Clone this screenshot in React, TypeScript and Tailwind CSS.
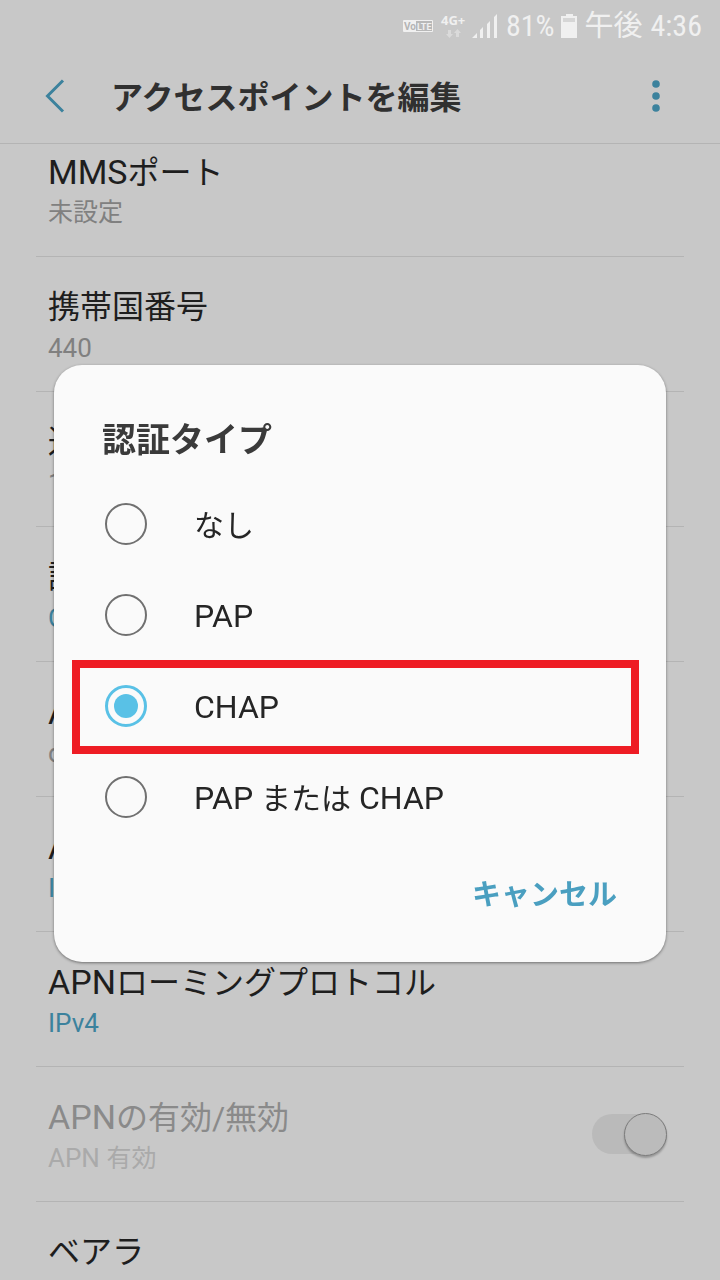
import React, { useState } from "react";
import clsx from "clsx";

interface Setting {
  latin?: string;
  title: string;
  valueLatin?: string;
  value?: string;
  accent?: boolean;
}

const settings: Setting[] = [
  { latin: "MMS", title: "ポート", value: "未設定" },
  { title: "携帯国番号", valueLatin: "440" },
  { title: "通信事業者コード", valueLatin: "10" },
  { title: "認証タイプ", valueLatin: "CHAP", accent: true },
  { latin: "APN", title: "タイプ", valueLatin: "default,supl" },
  { latin: "APN", title: "プロトコル", valueLatin: "IPv4", accent: true },
  { latin: "APN", title: "ローミングプロトコル", valueLatin: "IPv4", accent: true },
];

const authTypes = [
  { id: "none", label: <span className="text-[30px]">なし</span> },
  { id: "pap", label: "PAP" },
  { id: "chap", label: "CHAP", highlighted: true },
  {
    id: "pap-chap",
    label: (
      <>
        PAP <span className="text-[30px]">または</span> CHAP
      </>
    ),
  },
];

function StatusBar() {
  return (
    <div className="flex h-12 shrink-0 items-center justify-end pr-[18px] pt-1 font-['Roboto_Condensed','Roboto','Noto_Sans_CJK_JP',sans-serif] text-[30px] leading-none text-[#f0f0f0]">
      <svg width="30" height="12" viewBox="0 0 30 12" className="mr-2" aria-label="VoLTE">
        <rect width="30" height="12" rx="1" fill="#f0f0f0" />
        <rect x="13" y="1" width="16" height="10" fill="#b8b8b8" />
        <text x="1" y="9.5" fontSize="10" fontWeight="700" fontFamily="Roboto" fill="#b4b4b4">Vo</text>
        <text x="14" y="9.5" fontSize="9" fontWeight="700" fontFamily="Roboto" fill="#f0f0f0">LTE</text>
      </svg>
      <svg width="26" height="26" viewBox="0 0 26 26" className="mr-[5px] overflow-visible" aria-label="4G+">
        <text x="0" y="12" fontSize="13" fontWeight="700" fontFamily="Open Sans" fill="#f0f0f0">4G+</text>
        <path d="M7 17h3v4h2l-3.500 4-3.500-4h2z" fill="#dadada" />
        <path d="M15 24h3v-4h2l-3.500-4-3.500 4h2z" fill="#dadada" />
      </svg>
      <svg width="25" height="24" viewBox="0 0 25 24" className="mr-[9px]" fill="#f0f0f0">
        <path d="M0 24l5-5v5zM8 24v-8l3-3v11zM15 24V10l3-3v17zM22 24V3l3-3v24z" />
      </svg>
      <span className="mr-[6px]">81%</span>
      <svg width="16" height="24" viewBox="0 0 16 24" className="mr-2">
        <path d="M5 0h7v2h4v22H0V2h5z" fill="#f0f0f0" />
        <path d="M2 4h12v4H2z" fill="#d6d6d6" />
      </svg>
      <span className="mr-2 text-[29px]">午後</span>
      <span>4:36</span>
    </div>
  );
}

function Header() {
  return (
    <header className="flex h-24 shrink-0 items-center border-b border-[#b4b4b4] pl-[45px] pr-[48px]">
      <button aria-label="戻る" className="mr-[46px]">
        <svg width="20" height="34" viewBox="0 0 20 34" fill="none" stroke="#3c829d" strokeWidth="3">
          <path d="M18 1.500L2.500 17 18 32.500" />
        </svg>
      </button>
      <h1 className="grow pt-1 text-[32px] font-bold leading-none text-[#303030]">アクセスポイントを編集</h1>
      <button aria-label="その他" className="flex w-8 justify-center">
        <svg width="8" height="32" viewBox="0 0 8 32" fill="#3c829d">
          <circle cx="4" cy="4" r="3.800" />
          <circle cx="4" cy="16" r="3.800" />
          <circle cx="4" cy="28" r="3.800" />
        </svg>
      </button>
    </header>
  );
}

function SettingText({ latin, title, valueLatin, value, accent }: Setting) {
  return (
    <div>
      <div className="h-11 whitespace-nowrap text-[32px] leading-[44px]">
        {latin && <span className="text-[34px]">{latin}</span>}
        {title}
      </div>
      <div className={clsx("h-[38px] text-[25px] leading-[38px]", accent ? "text-[#3c829d]" : "text-[#808080]")}>
        {valueLatin && <span className="text-[26px]">{valueLatin}</span>}
        {value}
      </div>
    </div>
  );
}

function SettingsList() {
  return (
    <ul className="min-h-0 grow overflow-hidden px-9 text-[#1e1e1e]">
      {settings.map((item, i) => (
        <li
          key={i}
          className={clsx("border-b border-[#b4b4b4] px-3 pb-6", i === 0 ? "pt-[6px]" : "pt-7")}
        >
          <SettingText {...item} />
        </li>
      ))}
      <li className="border-b border-[#b4b4b4]">
        <label className="flex items-center justify-between px-3 pb-6 pt-7">
          <span className="block">
            <span className="block h-11 text-[32px] leading-[44px] text-[#8a8a8a]">
              <span className="text-[34px]">APN</span>の有効/無効
            </span>
            <span className="block h-[38px] text-[25px] leading-[38px] text-[#aaaaaa]">
              <span className="text-[26px]">APN </span>有効
            </span>
          </span>
          <input type="checkbox" role="switch" defaultChecked disabled className="sr-only" />
          <span className="mb-1 mr-[5px] flex h-10 w-[75px] items-center justify-end rounded-full bg-[#bababa]">
            <span className="size-[43px] shrink-0 rounded-full border border-[#7c7c7c] bg-[#bbbbbb] shadow-[0_2px_2px_rgba(0,0,0,0.25)]" />
          </span>
        </label>
      </li>
      <li className="px-3 pb-6 pt-7">
        <SettingText title="ベアラ" />
      </li>
    </ul>
  );
}

function AuthTypeDialog() {
  const [selected, setSelected] = useState("chap");

  return (
    <div className="fixed inset-0 flex items-center px-[54px] pt-[47px]">
      <div
        role="dialog"
        aria-labelledby="auth-title"
        className="w-full rounded-[28px] bg-[#fafafa] pb-[37px] pt-[50px] shadow-[0_1px_3px_rgba(0,0,0,0.45)]"
      >
        <h2 id="auth-title" className="mb-[13px] pl-12 text-[34px] font-bold leading-[50px] text-[#3a3a3a]">
          認証タイプ
        </h2>
        {authTypes.map((type) => (
          <label
            key={type.id}
            className="relative flex h-[91px] items-center pl-[51px] text-[32px] leading-none text-[#252525]"
          >
            <input
              type="radio"
              name="auth"
              checked={selected === type.id}
              onChange={() => setSelected(type.id)}
              className="peer sr-only"
            />
            <span className="mr-[47px] flex size-[42px] items-center justify-center rounded-full border-2 border-[#707070] peer-checked:border-[3px] peer-checked:border-[#59c1e6] peer-checked:[&>span]:bg-[#59c1e6]">
              <span className="size-6 rounded-full" />
            </span>
            <span className="pt-[2px]">{type.label}</span>
            {type.highlighted && (
              <span className="pointer-events-none absolute -bottom-[3px] left-[18px] right-[27px] top-0 border-8 border-[#ee1c24]" />
            )}
          </label>
        ))}
        <div className="mt-[23px] flex justify-end pr-[49px]">
          <button className="text-[29px] font-bold leading-[60px] text-[#4a9fc0]">キャンセル</button>
        </div>
      </div>
    </div>
  );
}

export default function App() {
  return (
    <div
      lang="ja"
      className="flex h-screen flex-col overflow-hidden bg-[#c8c8c8] font-['Roboto','Noto_Sans_CJK_JP',sans-serif]"
    >
      <StatusBar />
      <Header />
      <SettingsList />
      <AuthTypeDialog />
    </div>
  );
}
